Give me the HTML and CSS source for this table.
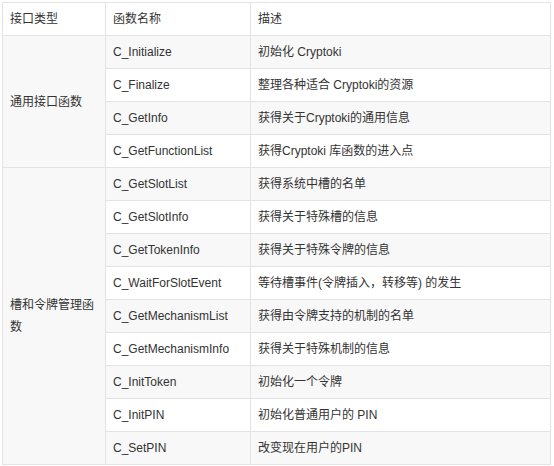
FILE: index.html
```html
<!DOCTYPE html>
<html lang="zh">
<head>
<meta charset="utf-8">
<link rel="stylesheet" href="styles.css">
</head>
<body>
<table class="api-table">
  <colgroup>
    <col class="c-type">
    <col class="c-name">
    <col class="c-desc">
  </colgroup>
  <tr><td>接口类型</td><td>函数名称</td><td>描述</td></tr>
  <tr><td rowspan="4">通用接口函数</td><td>C_Initialize</td><td>初始化 Cryptoki</td></tr>
  <tr><td>C_Finalize</td><td>整理各种适合 Cryptoki的资源</td></tr>
  <tr><td>C_GetInfo</td><td>获得关于Cryptoki的通用信息</td></tr>
  <tr><td>C_GetFunctionList</td><td>获得Cryptoki 库函数的进入点</td></tr>
  <tr><td rowspan="9">槽和令牌管理函数</td><td>C_GetSlotList</td><td>获得系统中槽的名单</td></tr>
  <tr><td>C_GetSlotInfo</td><td>获得关于特殊槽的信息</td></tr>
  <tr><td>C_GetTokenInfo</td><td>获得关于特殊令牌的信息</td></tr>
  <tr><td>C_WaitForSlotEvent</td><td>等待槽事件(令牌插入，转移等) 的发生</td></tr>
  <tr><td>C_GetMechanismList</td><td>获得由令牌支持的机制的名单</td></tr>
  <tr><td>C_GetMechanismInfo</td><td>获得关于特殊机制的信息</td></tr>
  <tr><td>C_InitToken</td><td>初始化一个令牌</td></tr>
  <tr><td>C_InitPIN</td><td>初始化普通用户的 PIN</td></tr>
  <tr><td>C_SetPIN</td><td>改变现在用户的PIN</td></tr>
</table>
</body>
</html>
```

FILE: styles.css
```css
html, body {
  margin: 0;
  background: #ffffff;
}
body {
  padding: 2px 0 0 2px;
  font-family: "Liberation Sans", Arial, "Noto Sans CJK SC", sans-serif;
  font-size: 12px;
  color: #333333;
}
.api-table {
  border-collapse: collapse;
  width: 548px;
  table-layout: fixed;
}
.c-type { width: 103px; }
.c-name { width: 145px; }
.c-desc { width: 300px; }
.api-table td {
  border: 1px solid #e3e3e3;
  height: 33px;
  box-sizing: border-box;
  padding: 0 7px;
  vertical-align: middle;
  line-height: 22px;
  text-align: left;
}
.api-table tr:nth-child(even) td {
  background: #f8f8f8;
}
.api-table tr:nth-child(odd) td {
  background: #ffffff;
}
```
